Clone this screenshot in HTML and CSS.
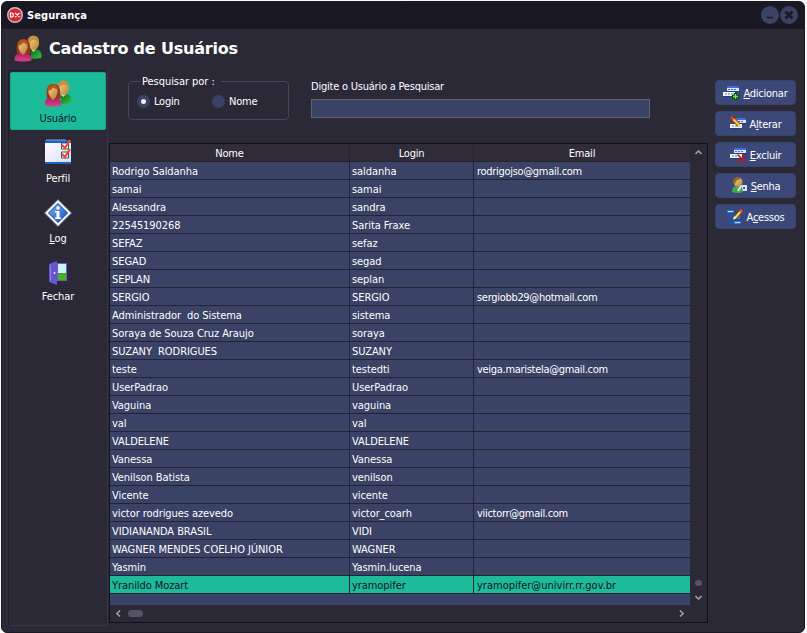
FILE: index.html
```
<!DOCTYPE html>
<html lang="pt-BR">
<head>
<meta charset="utf-8">
<title>Segurança</title>
<link rel="stylesheet" href="styles.css">
</head>
<body>
<svg class="defs" width="0" height="0">
  <defs>
    <linearGradient id="skin" x1="0" y1="0" x2="1" y2="1"><stop offset="0" stop-color="#f3d48e"/><stop offset="1" stop-color="#b98336"/></linearGradient>
    <linearGradient id="pink" x1="0" y1="0" x2="0" y2="1"><stop offset="0" stop-color="#a81c5c"/><stop offset="1" stop-color="#d8458a"/></linearGradient>
    <linearGradient id="leaf" x1="0" y1="0" x2="1" y2="1"><stop offset="0" stop-color="#0d6a1c"/><stop offset="1" stop-color="#3cc442"/></linearGradient>
    <linearGradient id="blue" x1="0" y1="0" x2="1" y2="1"><stop offset="0" stop-color="#7fb2f5"/><stop offset="1" stop-color="#0d4fc4"/></linearGradient>
    <linearGradient id="paper" x1="0" y1="0" x2="1" y2="1"><stop offset="0" stop-color="#fff"/><stop offset="1" stop-color="#d5dbea"/></linearGradient>
    <symbol id="people" viewBox="0 0 28 27">
      <path d="M17 23.500V17q1-3 4-3 6 0 6.500 6v2.500q-5 2-10.500 1z" fill="url(#leaf)"/>
      <path d="M17 14.500l2.500 2.500 2.500-3-1-2h-3z" fill="#e9d9b4"/>
      <ellipse cx="19.500" cy="8" rx="5.500" ry="7" fill="url(#skin)"/>
      <path d="M13.500 8Q13 1 19 .5q6 0 6 6l-1 2q-1-4-5-4l-3 2z" fill="#c98e3f"/>
      <path d="M3 18Q1 5 8 4q8-.5 8 7 0 4 1 7-7 3-14 0z" fill="#8f3c12"/>
      <path d="M.5 25.500q0-7 5-8h7q5 1 5 8-8 2-17 0z" fill="url(#pink)"/>
      <path d="M6 17l3 3 3-3v-3H6z" fill="#c99043"/>
      <ellipse cx="9" cy="11.500" rx="4.600" ry="6" fill="url(#skin)"/>
      <path d="M3.500 11q1-6.500 5.500-6.500t5.500 5q-3 0-5-2-2 3-6 3.500z" fill="#b9521c"/>
    </symbol>
    <symbol id="rows" viewBox="0 0 16 11">
      <path d="M4 0h12v6H4z" fill="#dce6ff"/><path d="M4 0h12v2H4z" fill="#3b6fe0"/>
      <path d="M0 6h12v4H0z" fill="#f4f6ff"/><path d="M4 5h12v1H4zM0 10h11v1H0z" fill="#233b86"/>
      <path d="M5 3.500h2m1 0h2m1 0h2M2 8h2m1 0h2m1 0h2" stroke="#5668a0" fill="none"/>
    </symbol>
  </defs>
</svg>
<div class="window">
  <header class="titlebar">
    <svg class="app" viewBox="0 0 16 16"><circle cx="8" cy="8" r="7.300" fill="#da2631" stroke="#c9bfc4" stroke-width="1.400"/><path d="M3.500 6v4h1q1.800 0 1.800-2T4.500 6zM8 6l4.500 4M12.500 6L8 10" fill="none" stroke="#fff" stroke-width="1.200"/></svg>
    <span class="apptitle">Segurança</span>
    <span class="winbtn"><svg viewBox="0 0 18 18"><path d="M6 11.500h6" stroke="#1a1923" stroke-width="1.300"/></svg></span>
    <span class="winbtn"><svg viewBox="0 0 18 18"><path d="M5.500 5.500l7 7m0-7l-7 7" stroke="#1a1923" stroke-width="2.700"/></svg></span>
  </header>
  <div class="heading"><svg class="people"><use href="#people"/></svg><h1>Cadastro de Usuários</h1></div>
  <div class="body">
    <nav class="side">
      <a class="item active"><svg class="people"><use href="#people"/></svg><span>Usuário</span></a>
      <a class="item perfil"><svg width="28" height="27" viewBox="0 0 28 27"><path d="M1 3h26v23H1z" fill="url(#paper)"/><path d="M1 2h26v3H1zM1 24h26v2H1z" fill="#1c62c4"/><path d="M2 2h20" stroke="#71aaf0"/><path d="M17.500 5h7v6h-7zM17.500 14h7v6h-7z" fill="#fff" stroke="#34517e"/><path d="M18 7l3 3 5-8M18 16l3 3 5-8" stroke="#ef4a22" stroke-width="2.200" fill="none"/></svg><span>Perfil</span></a>
      <a class="item log"><svg width="28" height="28" viewBox="0 0 28 28"><path d="M14 .7L27.300 14 14 27.300.7 14z" fill="#f3f5f8" stroke="#8e9bac" stroke-linejoin="round"/><path d="M14 4.500l9.500 9.500-9.500 9.500L4.500 14z" fill="url(#blue)" stroke="#0c3f9c"/><path d="M12.500 7.500h3v3h-3zM11 12h4.500v6.500H17V20h-6v-1.500h1.500v-5H11z" fill="#fff"/></svg><span><u>L</u>og</span></a>
      <a class="item fechar"><svg width="20" height="24" viewBox="0 0 20 24"><path d="M8 2h11v18H8z" fill="#705bd0"/><path d="M10 3h8v9h-8z" fill="#c9f6fa"/><path d="M10 13l8-1v7h-8z" fill="#44b515"/><path d="M1 3l8-3v24l-8-3z" fill="#6656cb"/><path d="M2.500 4v15.500" stroke="#8b80e5"/><circle cx="6.500" cy="12" r="1" fill="#e5e6ff"/></svg><span>Fechar</span></a>
    </nav>
    <main>
      <div class="search">
        <fieldset><legend>Pesquisar por :</legend>
          <label class="on"><i></i>Login</label><label><i></i>Nome</label>
        </fieldset>
        <div class="field"><span>Digite o Usuário a Pesquisar</span><div class="input"></div></div>
      </div>
      <div class="gridbox">
        <table>
          <colgroup><col class="c1"><col class="c2"><col class="c3"></colgroup>
          <thead><tr><th>Nome</th><th>Login</th><th>Email</th></tr></thead>
          <tbody>
            <tr><td>Rodrigo Saldanha</td><td>saldanha</td><td>rodrigojso@gmail.com</td></tr>
            <tr><td>samai</td><td>samai</td><td></td></tr>
            <tr><td>Alessandra</td><td>sandra</td><td></td></tr>
            <tr><td>22545190268</td><td>Sarita Fraxe</td><td></td></tr>
            <tr><td>SEFAZ</td><td>sefaz</td><td></td></tr>
            <tr><td>SEGAD</td><td>segad</td><td></td></tr>
            <tr><td>SEPLAN</td><td>seplan</td><td></td></tr>
            <tr><td>SERGIO</td><td>SERGIO</td><td>sergiobb29@hotmail.com</td></tr>
            <tr><td>Administrador  do Sistema</td><td>sistema</td><td></td></tr>
            <tr><td>Soraya de Souza Cruz Araujo</td><td>soraya</td><td></td></tr>
            <tr><td>SUZANY  RODRIGUES</td><td>SUZANY</td><td></td></tr>
            <tr><td>teste</td><td>testedti</td><td>veiga.maristela@gmail.com</td></tr>
            <tr><td>UserPadrao</td><td>UserPadrao</td><td></td></tr>
            <tr><td>Vaguina</td><td>vaguina</td><td></td></tr>
            <tr><td>val</td><td>val</td><td></td></tr>
            <tr><td>VALDELENE</td><td>VALDELENE</td><td></td></tr>
            <tr><td>Vanessa</td><td>Vanessa</td><td></td></tr>
            <tr><td>Venilson Batista</td><td>venilson</td><td></td></tr>
            <tr><td>Vicente</td><td>vicente</td><td></td></tr>
            <tr><td>victor rodrigues azevedo</td><td>victor_coarh</td><td>viictorr@gmail.com</td></tr>
            <tr><td>VIDIANANDA BRASIL</td><td>VIDI</td><td></td></tr>
            <tr><td>WAGNER MENDES COELHO JÚNIOR</td><td>WAGNER</td><td></td></tr>
            <tr><td>Yasmin</td><td>Yasmin.lucena</td><td></td></tr>
            <tr class="sel"><td>Yranildo Mozart</td><td>yramopifer</td><td>yramopifer@univirr.rr.gov.br</td></tr>
          </tbody>
        </table>
        <div class="vbar"><svg width="7" height="5" viewBox="0 0 7 5"><path d="M.5 4l3-3 3 3"/></svg><b></b><svg width="7" height="5" viewBox="0 0 7 5"><path d="M.5 1l3 3 3-3"/></svg></div>
        <div class="rest"></div>
        <div class="hbar"><svg width="5" height="7" viewBox="0 0 5 7"><path d="M4 .5l-3 3 3 3"/></svg><b></b><svg class="next" width="5" height="7" viewBox="0 0 5 7"><path d="M1 .5l3 3-3 3"/></svg></div>
      </div>
    </main>
    <aside>
      <button><svg width="17" height="16" viewBox="0 0 17 16"><use href="#rows" y="1" width="16" height="11"/><path d="M12.500 8v7M9 11.500h7" stroke="#06490d" stroke-width="3.400"/><path d="M12.500 9v5M10 11.500h5" stroke="#70ec4c" stroke-width="1.300"/></svg><span><u>A</u>dicionar</span></button>
      <button><svg width="17" height="16" viewBox="0 0 17 16"><use href="#rows" y="2" width="16" height="11"/><path d="M2 2l7 7" stroke="#5f2d0a" stroke-width="4"/><path d="M2 2l7 7" stroke="#ffc33d" stroke-width="2.500"/><path d="M1 1l2.500 2.500" stroke="#ee3030" stroke-width="3"/><path d="M8 10l3 1-1-3z" fill="#f8e0b0"/></svg><span>A<u>l</u>terar</span></button>
      <button><svg width="17" height="16" viewBox="0 0 17 16"><use href="#rows" y="1" width="16" height="11"/><path d="M7.500 7.500l8 8M15.500 7.500l-8 8" stroke="#c41414" stroke-width="1.500"/></svg><span><u>E</u>xcluir</span></button>
      <button><svg width="17" height="17" viewBox="0 0 17 17"><path d="M1 15q0-6 5-6 6 0 6 6-5 2-11 0z" fill="#46a84e"/><circle cx="7" cy="5" r="4.500" fill="url(#skin)"/><path d="M2 5q0-5 5-5l3 2q-6 0-6 6z" fill="#946222"/><path d="M10 8h6v6h-4z" fill="#d5e5ff"/><path d="M12 10h2v2h-2z" fill="#3f5e9b"/><path d="M10 9l-3 5" stroke="#e5e9f2" stroke-width="2"/></svg><span><u>S</u>enha</span></button>
      <button><svg width="17" height="16" viewBox="0 0 17 16"><path d="M3 2v12h5M3 8h4" stroke="#1459bd" fill="none" stroke-width="1.300"/><path d="M0 1h7v3H0zM7 6h6v4H7zM7 12h7v3H7z" fill="#2878dc"/><path d="M1 2.500h5M8 13.500h5" stroke="#bce1ff"/><path d="M8 9l6-7" stroke="#603609" stroke-width="3.600"/><path d="M8 9l6-7" stroke="#ffd14a" stroke-width="2.400"/><path d="M13 3l2-2" stroke="#ee4635" stroke-width="3"/><path d="M6 11l1-4 2 2z" fill="#fff"/></svg><span>A<u>c</u>essos</span></button>
    </aside>
  </div>
</div>
</body>
</html>
```

FILE: styles.css
```
* { box-sizing: border-box; }
body { margin: 0; padding: 1px 2px 0 1px; width: 807px; height: 633px; overflow: hidden; background: linear-gradient(90deg, #fff 50%, #f6f6f6 50%); font: 11px "DejaVu Sans Condensed", "DejaVu Sans", sans-serif; font-stretch: condensed; letter-spacing: -.22px; color: #fff; }
.defs { position: absolute; }
svg { display: block; flex: none; }
u { text-decoration: underline; text-underline-offset: 1px; }
.window { width: 804px; height: 632px; background: #2c2937; border: 1px solid #1a1923; border-radius: 6px; overflow: hidden; }
.titlebar { height: 27px; background: #1a1923; display: flex; align-items: center; padding: 0 6px 0 5px; gap: 1px; }
.app { width: 16px; height: 16px; margin-top: -1px; }
.apptitle { font: bold 11px "DejaVu Sans Condensed", sans-serif; letter-spacing: .1px; margin-left: 3px; flex: 1; }
.winbtn { width: 18px; height: 18px; margin-top: -1px; border-radius: 50%; background: #3a4265; }
.heading { height: 41px; display: flex; align-items: center; padding: 0 0 2px 12px; gap: 7px; }
.people { width: 28px; height: 27px; }
h1 { margin: 0; font: bold 16px "DejaVu Sans", sans-serif; font-stretch: normal; letter-spacing: -.2px; }
.body { display: flex; height: 562px; padding-left: 6px; }
.side { width: 100px; height: 556px; border: 1px solid #1f1d28; border-right-color: #383549; border-bottom-color: #383549; padding: 1px; }
.item { display: flex; flex-direction: column; align-items: center; width: 96px; line-height: 14px; }
.item span { position: relative; top: 1px; letter-spacing: -.1px; }
.active { background: #1cbc9b; color: #10121c; height: 58px; padding-top: 7px; border-radius: 2px; border: 1px solid #17a78a; }
.active span { margin-top: 4px; }
.perfil { margin-top: 8px; }
.perfil span { margin-top: 6px; }
.log { margin-top: 14px; }
.log span { margin-top: 4px; }
.fechar { margin-top: 16px; }
.fechar span { margin-top: 4px; }
main { width: 599px; margin-left: 1px; }
.search { height: 73px; display: flex; }
fieldset { margin: 5px 0 0 19px; padding: 0 0 0 8px; width: 161px; height: 45px; border: 1px solid #494756; border-radius: 4px; display: flex; }
legend { padding: 0 6px 0 2px; margin-left: 3px; line-height: 13px; letter-spacing: -.05px; }
label { display: flex; align-items: center; height: 13px; margin-top: 7px; gap: 4px; width: 75px; }
label i { width: 13px; height: 13px; border-radius: 50%; background: #3a4265; display: flex; align-items: center; justify-content: center; }
.on i::after { content: ""; width: 5px; height: 5px; border-radius: 50%; background: #eeeef2; }
.field { margin: 10px 0 0 22px; }
.field span { display: block; line-height: 14px; }
.input { width: 339px; height: 19px; margin-top: 5px; background: #3a4265; border: 1px solid #62636b; }
.gridbox { width: 599px; height: 480px; border: 1px solid #111018; display: grid; grid-template-columns: 580px 17px; grid-template-rows: 450px 11px 17px; }
table { border-collapse: separate; border-spacing: 0; table-layout: fixed; width: 580px; }
.c1 { width: 240px; } .c2 { width: 124px; } .c3 { width: 216px; }
th, td { height: 18px; padding: 2px 0 0 2px; line-height: 15px; border-right: 1px solid #252331; border-bottom: 1px solid #252331; white-space: pre; font-weight: normal; }
td { background: #3a4265; letter-spacing: -.07px; }
td:last-child { padding-left: 3px; letter-spacing: -.3px; }
th { text-align: center; background: #2f2c38; padding-left: 0; }
th:last-child, td:last-child { border-right: 0; }
.sel td { background: #1cbc9b; color: #10121c; }
.sel td:last-child { letter-spacing: 0; }
.vbar { grid-row: 1 / 3; grid-column: 2; display: flex; flex-direction: column; align-items: center; padding: 6px 0 5px; }
.vbar b { width: 7px; height: 6px; border-radius: 3px; background: #565364; margin: auto 0 9px; }
.rest { background: #3a4265; grid-column: 1; grid-row: 2; }
.hbar { grid-row: 3; display: flex; align-items: center; padding: 0 6px; }
.hbar b { width: 15px; height: 7px; border-radius: 4px; background: #565364; margin-left: 7px; }
.next { margin-left: auto; }
.vbar path, .hbar path { fill: none; stroke: #9b9aac; stroke-width: 1.600; }
aside { margin-left: 7px; padding-top: 10px; display: flex; flex-direction: column; gap: 7px; }
button { width: 81px; height: 25px; margin-bottom: -1px; display: flex; align-items: center; justify-content: center; gap: 3px; padding: 0; border: 1px solid #394568; border-radius: 4px; background: #3c4877; color: #fff; font: 11px "DejaVu Sans Condensed", sans-serif; letter-spacing: -.25px; }
button span { padding-top: 1px; }
```
